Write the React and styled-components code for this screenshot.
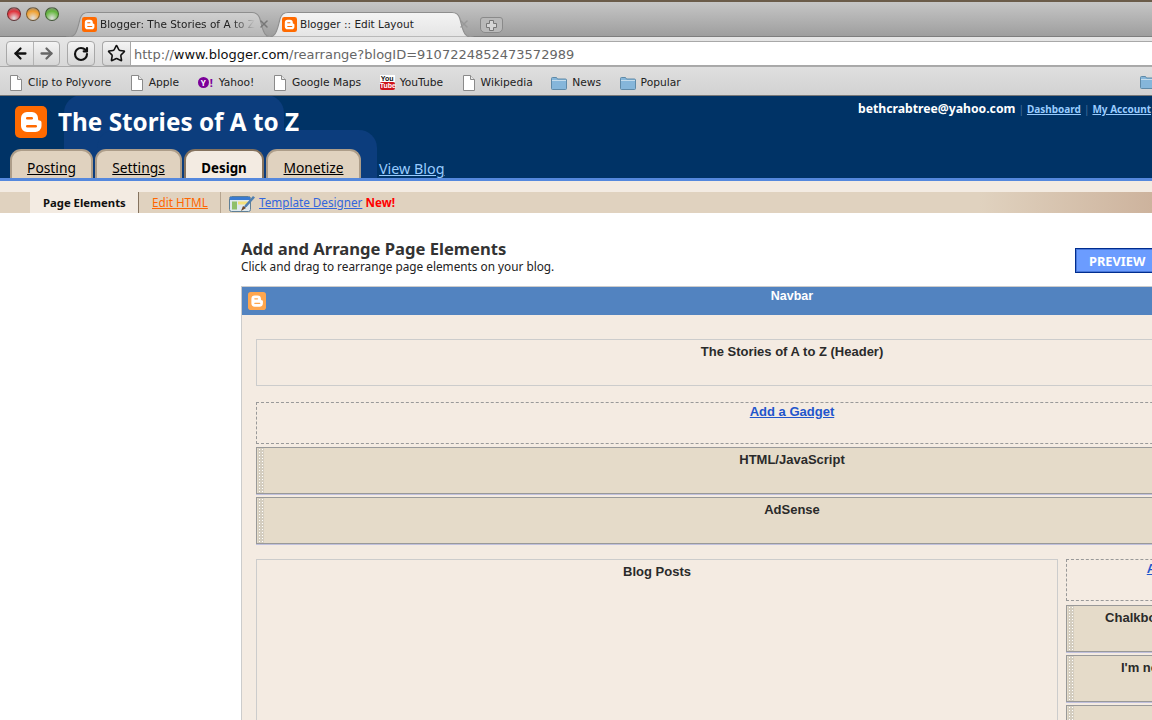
import React from 'react'
import styled, { createGlobalStyle } from 'styled-components'
import { ArrowLeft, ArrowRight, RotateCw, Star, X } from 'lucide-react'

const trebuchet = '"Noto Sans", "Open Sans", sans-serif'
const lucida = '"DejaVu Sans", sans-serif'

const BloggerMark = ({ size, faded }) => (
  <svg width={size} height={size} viewBox="0 0 32 32">
    <rect width="32" height="32" rx="5" fill={faded ? '#ffa64d' : '#ff6a00'} />
    <path
      d="M12 6h5a6 6 0 0 1 6 6v1a1.5 1.5 0 0 0 1.5 1.5A2 2 0 0 1 26.500 16.500V20a6 6 0 0 1-6 6H12a6 6 0 0 1-6-6V12a6 6 0 0 1 6-6z"
      fill="#fff"
    />
    <rect x="11" y="11" width="7" height="2.400" rx="1.200" fill={faded ? '#ffa64d' : '#ff6a00'} />
    <rect x="11" y="19" width="11" height="2.400" rx="1.200" fill={faded ? '#ffa64d' : '#ff6a00'} />
  </svg>
)

const PageIcon = () => (
  <svg width="14" height="16" viewBox="0 0 14 16">
    <path d="M1.500.5h7l4 4v11h-11z" fill="#fff" stroke="#8a8a8a" />
    <path d="M8.500.5v4h4" fill="#e8e8e8" stroke="#8a8a8a" />
  </svg>
)

const FolderIcon = () => (
  <svg width="16" height="14" viewBox="0 0 16 14">
    <path d="M.5 2.500a1 1 0 0 1 1-1h4l1 1.500h8a1 1 0 0 1 1 1v8.500a1 1 0 0 1-1 1h-13a1 1 0 0 1-1-1z" fill="#85b6da" stroke="#5f8aa8" />
    <rect x="1" y="4" width="14" height="1" fill="#c4dcec" />
  </svg>
)

const TemplateIcon = () => (
  <svg width="27" height="20" viewBox="0 0 27 20">
    <rect x=".5" y="3.500" width="21" height="15" rx="2" fill="#dfe9ee" stroke="#5f7f96" />
    <rect x="1" y="4" width="20" height="3" fill="#3a7bd0" />
    <rect x="3" y="8.500" width="5" height="8" fill="#8fc06a" />
    <rect x="9" y="8.500" width="10" height="3" fill="#f4e27a" />
    <path d="M14 16l2-4 8-9 2 1.500-8 9z" fill="#4f7fb0" />
    <path d="M12 18l2-5 3 2z" fill="#6d4a2a" />
  </svg>
)

const PlusOutline = () => (
  <svg width="13" height="13" viewBox="0 0 13 13">
    <path d="M4.500 1.500h4v3h3v4h-3v3h-4v-3h-3v-4h3z" fill="#d6d6d6" stroke="#777" />
  </svg>
)

const TabShape = ({ active }) => (
  <TabSvg viewBox="0 0 190 24" preserveAspectRatio="none">
    <path
      d="M0 24c8 0 9-3 11-10l2-8c1-3 3-5.500 7-5.500h150c4 0 6 2.500 7 5.500l2 8c2 7 3 10 11 10z"
      fill={active ? 'url(#tabActive)' : 'url(#tabIdle)'}
      stroke="#8e8e8e"
    />
    <defs>
      <linearGradient id="tabActive" x1="0" y1="0" x2="0" y2="1">
        <stop offset="0" stopColor="#f4f4f4" />
        <stop offset="1" stopColor="#e4e4e4" />
      </linearGradient>
      <linearGradient id="tabIdle" x1="0" y1="0" x2="0" y2="1">
        <stop offset="0" stopColor="#d0d0d0" />
        <stop offset="1" stopColor="#b6b6b6" />
      </linearGradient>
    </defs>
  </TabSvg>
)

const App = () => (
  <Screen>
    <GlobalStyle />
    <TitleBar>
      <Lights>
        <Light $color="#e0323a" />
        <Light $color="#f0a030" />
        <Light $color="#62b53c" />
      </Lights>
      <TabStrip>
        <BrowserTab>
          <TabShape />
          <BloggerMark size={15} />
          <TabTitle $faded>Blogger: The Stories of A to Z</TabTitle>
          <X size={12} strokeWidth={3} color="#777" />
        </BrowserTab>
        <BrowserTab $active>
          <TabShape active />
          <BloggerMark size={15} />
          <TabTitle>Blogger :: Edit Layout</TabTitle>
          <X size={12} strokeWidth={3} color="#999" />
        </BrowserTab>
        <NewTab>
          <PlusOutline />
        </NewTab>
      </TabStrip>
    </TitleBar>

    <Toolbar>
      <ButtonGroup>
        <ToolButton>
          <ArrowLeft size={17} strokeWidth={3.2} color="#111" />
        </ToolButton>
        <ToolButton $divided>
          <ArrowRight size={17} strokeWidth={3.2} color="#666" />
        </ToolButton>
      </ButtonGroup>
      <ReloadButton>
        <RotateCw size={16} strokeWidth={3.2} color="#111" />
      </ReloadButton>
      <StarButton>
        <Star size={19} strokeWidth={2} color="#111" />
      </StarButton>
      <Address>
        <span>http://</span>
        <strong>www.blogger.com</strong>
        <span>/rearrange?blogID=9107224852473572989</span>
      </Address>
    </Toolbar>

    <BookmarkBar>
      {bookmarks.map(({ label, icon }) => (
        <Bookmark key={label}>
          {icon}
          {label}
        </Bookmark>
      ))}
      <LastFolder>
        <FolderIcon />
      </LastFolder>
    </BookmarkBar>

    <Masthead>
      <BackShape $left={64} $top={-1} $width={220} $height={120} />
      <BackShape $left={97} $top={34} $width={280} $height={120} />
      <MastTop>
        <Brand>
          <BloggerMark size={32} />
          <BlogTitle>The Stories of A to Z</BlogTitle>
        </Brand>
        <Account>
          <b>bethcrabtree@yahoo.com</b>
          <Pipe>|</Pipe>
          <a>Dashboard</a>
          <Pipe>|</Pipe>
          <a>My Account</a>
        </Account>
      </MastTop>
      <MainTabs>
        <MainTab $width={83}>Posting</MainTab>
        <MainTab $width={87}>Settings</MainTab>
        <MainTab $width={80} $active>Design</MainTab>
        <MainTab $width={95}>Monetize</MainTab>
        <ViewBlog>View Blog</ViewBlog>
      </MainTabs>
    </Masthead>

    <Spacer />

    <SubNav>
      <SubActive>Page Elements</SubActive>
      <SubLink>Edit HTML</SubLink>
      <TemplateItem>
        <TemplateIcon />
        <a>Template Designer</a>
        <b>New!</b>
      </TemplateItem>
    </SubNav>

    <Content>
      <Intro>
        <IntroText>
          <Heading>Add and Arrange Page Elements</Heading>
          <Subheading>Click and drag to rearrange page elements on your blog.</Subheading>
        </IntroText>
        <Preview>PREVIEW</Preview>
      </Intro>

      <Layout>
        <Navbar>
          <BloggerMark size={18} faded />
          <span>Navbar</span>
        </Navbar>
        <LayoutBody>
          <PlainBox $height={47}>The Stories of A to Z (Header)</PlainBox>
          <AddGadget $top={16}>
            <a>Add a Gadget</a>
          </AddGadget>
          <Widget $top={3}>HTML/JavaScript</Widget>
          <Widget $top={3}>AdSense</Widget>
          <Columns>
            <MainColumn>Blog Posts</MainColumn>
            <SideColumn>
              <AddGadget>
                <a>Add a Gadget</a>
              </AddGadget>
              <Widget $top={4}>Chalkboard Art and Stories</Widget>
              <Widget $top={3}>I'm now reading these</Widget>
              <Widget $top={3} />
            </SideColumn>
          </Columns>
        </LayoutBody>
      </Layout>
    </Content>
  </Screen>
)

const GlobalStyle = createGlobalStyle`
  html, body {
    margin: 0;
    height: 720px;
    overflow: hidden;
    background: #fff;
  }
  * {
    box-sizing: border-box;
  }
`

const Screen = styled.div`
  width: 1152px;
  height: 720px;
  overflow: hidden;
  display: flex;
  flex-direction: column;
  background: #fff;
`

const TitleBar = styled.div`
  height: 37px;
  flex: none;
  display: flex;
  border-top: 2px solid #6b5c4a;
  border-bottom: 1px solid #7e7e7e;
  background: linear-gradient(#c6c6c6, #9e9e9e);
`

const Lights = styled.div`
  display: flex;
  gap: 5px;
  padding: 5px 0 0 7px;
  width: 74px;
  flex: none;
`

const Light = styled.span`
  width: 14px;
  height: 14px;
  border-radius: 50%;
  border: 1px solid rgba(0, 0, 0, 0.45);
  background: radial-gradient(circle at 50% 85%, #fff9 0%, ${({ $color }) => $color} 60%, #5558 100%);
`

const TabStrip = styled.div`
  display: flex;
  align-items: flex-end;
  padding-top: 10px;
  margin-bottom: -1px;
`

const BrowserTab = styled.div`
  position: relative;
  width: 208px;
  height: 25px;
  margin-left: -8px;
  display: flex;
  align-items: center;
  gap: 3px;
  padding: 0 4px 1px 16px;
  z-index: ${({ $active }) => ($active ? 2 : 1)};

  > svg:not(:first-child) {
    position: relative;
    flex: none;
  }
`

const TabSvg = styled.svg`
  position: absolute;
  inset: 0;
  width: 100%;
  height: 100%;
`

const TabTitle = styled.span`
  position: relative;
  flex: 1;
  min-width: 0;
  overflow: hidden;
  white-space: nowrap;
  font: 10.5px ${lucida};
  color: #222;
  ${({ $faded }) =>
    $faded &&
    `-webkit-mask-image: linear-gradient(90deg, #000 85%, transparent 100%);`}
`

const NewTab = styled.div`
  width: 23px;
  height: 16px;
  margin: 0 0 4px 6px;
  display: flex;
  align-items: center;
  justify-content: center;
  border: 1px solid #8a8a8a;
  border-radius: 3px 3px 5px 5px;
  background: #b9b9b9;
`

const Toolbar = styled.div`
  height: 30px;
  flex: none;
  display: flex;
  align-items: flex-end;
  gap: 7px;
  padding-left: 6px;
  background: linear-gradient(#e6e6e6, #d8d8d8);
  border-bottom: 1px solid #aaa;
`

const ButtonGroup = styled.div`
  display: flex;
  height: 25px;
  border: 1px solid #a8a8a8;
  border-radius: 4px;
  background: linear-gradient(#f4f4f4, #d6d6d6);
`

const ToolButton = styled.div`
  width: 26px;
  display: flex;
  align-items: center;
  justify-content: center;
  ${({ $divided }) => $divided && 'border-left: 1px solid #b4b4b4;'}
`

const ReloadButton = styled(ButtonGroup)`
  width: 28px;
  align-items: center;
  justify-content: center;
`

const StarButton = styled(ButtonGroup)`
  width: 28px;
  margin-right: -7px;
  align-items: center;
  justify-content: center;
  border-radius: 4px 0 0 4px;
  border-right: none;
`

const Address = styled.div`
  flex: 1;
  height: 25px;
  padding: 1px 0 0 3px;
  display: flex;
  align-items: center;
  background: #fff;
  border: 1px solid #a8a8a8;
  border-right: none;
  font: 13px ${lucida};
  color: #666;
  white-space: nowrap;

  strong {
    font-weight: normal;
    color: #111;
  }
`

const BookmarkBar = styled.div`
  position: relative;
  height: 29px;
  flex: none;
  display: flex;
  align-items: center;
  gap: 18.5px;
  padding: 3px 0 0 9px;
  background: linear-gradient(#dfdfdf, #d2d2d2);
  border-bottom: 1px solid #777;
`

const Bookmark = styled.div`
  display: flex;
  align-items: center;
  gap: 5px;
  font: 10.7px ${lucida};
  color: #222;
  white-space: nowrap;
`

const LastFolder = styled.div`
  position: absolute;
  left: 1140px;
  top: 8px;
`

const YahooBadge = styled.span`
  display: flex;
  align-items: center;
  width: 16px;
  color: #7b0099;
  font: bold 11px/11px ${trebuchet};

  i {
    width: 11px;
    height: 11px;
    margin-right: 1px;
    border-radius: 50%;
    background: #7b0099;
    color: #fff;
    font: bold 8px/11px ${trebuchet};
    text-align: center;
  }
`

const YouTubeBadge = styled.span`
  width: 15px;
  display: flex;
  flex-direction: column;
  align-items: center;
  margin-top: -1px;
  font: bold 7px/7.500px "Liberation Sans", sans-serif;

  span {
    width: 100%;
    text-align: center;
    color: #111;
    background: #fff;
  }

  b {
    width: 100%;
    text-align: center;
    color: #fff;
    background: #d0121b;
    border-radius: 2px;
  }
`

const Masthead = styled.header`
  position: relative;
  height: 85px;
  flex: none;
  overflow: hidden;
  display: flex;
  flex-direction: column;
  justify-content: space-between;
  background: #003366;
  border-bottom: 3px solid #5588dd;
`

const BackShape = styled.div`
  position: absolute;
  left: ${({ $left }) => $left}px;
  top: ${({ $top }) => $top}px;
  width: ${({ $width }) => $width}px;
  height: ${({ $height }) => $height}px;
  border-radius: 18px;
  background: #0c3d7d;
`

const MastTop = styled.div`
  position: relative;
  display: flex;
  justify-content: space-between;
  padding: 10px 1px 0 15px;
`

const Brand = styled.div`
  display: flex;
  align-items: center;
  gap: 11px;
`

const BlogTitle = styled.h1`
  margin: -2px 0 0;
  font: bold 24.3px ${trebuchet};
  color: #fff;
  white-space: nowrap;
`

const Account = styled.div`
  margin-top: -6px;
  display: flex;
  align-items: baseline;
  gap: 3px;
  font: 10px ${trebuchet};
  white-space: nowrap;

  b {
    font-size: 12.2px;
    color: #fff;
  }

  a {
    color: #99ccff;
    font-weight: bold;
    text-decoration: underline;
  }
`

const Pipe = styled.span`
  color: #47709f;
`

const MainTabs = styled.nav`
  position: relative;
  display: flex;
  align-items: flex-end;
  gap: 2px;
  padding-left: 10px;
  margin-bottom: -3px;
`

const MainTab = styled.div`
  width: ${({ $width }) => $width}px;
  height: 32px;
  padding-top: 8px;
  text-align: center;
  border: 2px solid ${({ $active }) => ($active ? '#85735f' : '#ad9d89')};
  border-bottom: none;
  border-radius: 11px 11px 0 0;
  background: ${({ $active }) => ($active ? '#f3ebe2' : '#e0d2bf')};
  font: ${({ $active }) => ($active ? 'bold 13.3px/18px' : 'normal 13.8px/18px')} ${trebuchet};
  color: #000;
  text-decoration: ${({ $active }) => ($active ? 'none' : 'underline')};
`

const ViewBlog = styled.a`
  margin: 0 0 3px 16px;
  font: 14.3px/18px ${trebuchet};
  color: #99ccff;
  text-decoration: underline;
`

const Spacer = styled.div`
  height: 11px;
  flex: none;
  background: #f3ebe2;
`

const SubNav = styled.div`
  height: 21px;
  flex: none;
  display: flex;
  align-items: stretch;
  padding-left: 30px;
  font: 11.7px/21px ${trebuchet};
  background: linear-gradient(90deg, #e0d2bf 85%, #cdb39d 100%);
`

const SubActive = styled.div`
  width: 109px;
  padding-left: 13px;
  font-weight: bold;
  font-size: 11.300px;
  color: #111;
  background: #f3ebe2;
  border-right: 1px solid #85735f;
`

const SubLink = styled.a`
  width: 82px;
  padding-left: 13px;
  color: #ff6600;
  text-decoration: underline;
  border-right: 1px solid #b5a48f;
`

const TemplateItem = styled.div`
  display: flex;
  align-items: center;
  gap: 3px;
  padding-left: 8px;

  a {
    color: #3366dd;
    text-decoration: underline;
  }

  b {
    color: #f00;
    font-weight: bold;
  }
`

const Content = styled.main`
  flex: 1;
  padding: 27px 0 0 241px;
  min-height: 0;
`

const Intro = styled.div`
  display: flex;
  justify-content: space-between;
  align-items: flex-end;
  width: 924px;
  height: 46px;
`

const IntroText = styled.div`
  margin-bottom: 13px;
`

const Heading = styled.h2`
  margin: 0;
  font: bold 16.6px/20px ${trebuchet};
  color: #333;
`

const Subheading = styled.p`
  margin: 0;
  font: 11.8px/14px ${trebuchet};
  color: #222;
`

const Preview = styled.div`
  flex: none;
  width: 90px;
  height: 25px;
  margin: 0 0 13px 0;
  padding-left: 13px;
  border: 1px solid #002d8f;
  box-shadow: inset 0 0 0 1px #4a78d8;
  background: #6b9cff;
  color: #fff;
  font: bold 12.8px/24px ${trebuchet};
`

const Layout = styled.section`
  width: 1102px;
  border: 1px solid #ccc;
  background: #f4ebe2;
`

const Navbar = styled.div`
  position: relative;
  height: 28px;
  padding-top: 2px;
  background: #5283c0;
  text-align: center;
  font: bold 12.5px/15px "Liberation Sans", Arial, sans-serif;
  color: #fff;

  > svg {
    position: absolute;
    left: 6px;
    top: 5px;
  }
`

const LayoutBody = styled.div`
  padding: 24px 14px 0;
`

const boxText = `
  text-align: center;
  font: bold 13px/16px "Liberation Sans", Arial, sans-serif;
  color: #2a2a2a;
`

const PlainBox = styled.div`
  height: ${({ $height }) => $height}px;
  padding-top: 4px;
  border: 1px solid #ccc;
  ${boxText}
`

const AddGadget = styled.div`
  height: 42px;
  margin-top: ${({ $top }) => $top || 0}px;
  padding-top: 1px;
  border: 1px dashed #999;
  ${boxText}

  a {
    color: #2255cc;
    text-decoration: underline;
  }
`

const Widget = styled.div`
  position: relative;
  height: 47px;
  margin-top: ${({ $top }) => $top || 0}px;
  padding-top: 4px;
  border: 1px solid #999;
  box-shadow: 0 1px 0 #c0c0dc;
  background: #e5dbc9;
  ${boxText}

  &::before {
    content: '';
    position: absolute;
    left: 1px;
    top: 0;
    bottom: 0;
    width: 6px;
    background-color: #d4cdbf;
    background-image: radial-gradient(circle, #fff 0.8px, transparent 1px);
    background-size: 3px 3px;
  }
`

const Columns = styled.div`
  display: flex;
  gap: 8px;
  margin-top: 15px;
`

const MainColumn = styled.div`
  width: 802px;
  height: 400px;
  padding-top: 4px;
  border: 1px solid #ccc;
  ${boxText}
`

const SideColumn = styled.div`
  width: 246px;
  flex: none;
`

const bookmarks = [
  { label: 'Clip to Polyvore', icon: <PageIcon /> },
  { label: 'Apple', icon: <PageIcon /> },
  {
    label: 'Yahoo!',
    icon: (
      <YahooBadge>
        <i>Y</i>!
      </YahooBadge>
    ),
  },
  { label: 'Google Maps', icon: <PageIcon /> },
  {
    label: 'YouTube',
    icon: (
      <YouTubeBadge>
        <span>You</span>
        <b>Tube</b>
      </YouTubeBadge>
    ),
  },
  { label: 'Wikipedia', icon: <PageIcon /> },
  { label: 'News', icon: <FolderIcon /> },
  { label: 'Popular', icon: <FolderIcon /> },
]

export default App
